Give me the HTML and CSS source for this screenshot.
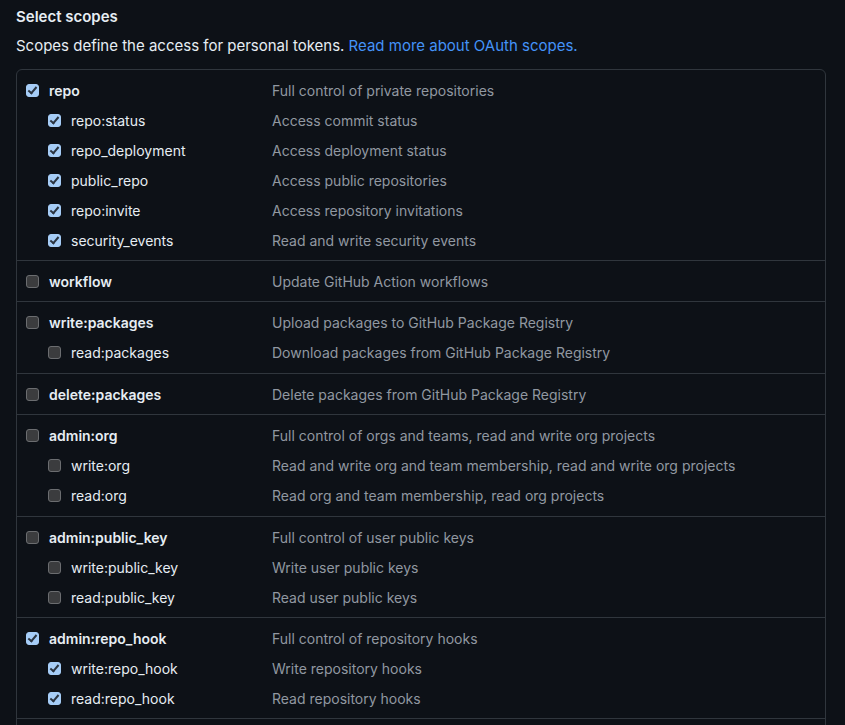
FILE: index.html
```html
<!DOCTYPE html>
<html lang="en">
<head>
<meta charset="utf-8">
<title>Select scopes</title>
<link rel="stylesheet" href="styles.css">
</head>
<body>
<div class="page">
  <h3 class="title">Select scopes</h3>
  <p class="note">Scopes define the access for personal tokens. <a class="link" href="#">Read more about OAuth scopes.</a></p>
  <div class="box">
    <div class="group">
      <div class="row top"><span class="cb on"></span><span class="name">repo</span><span class="desc">Full control of private repositories</span></div>
      <div class="row sub"><span class="cb on"></span><span class="name">repo:status</span><span class="desc">Access commit status</span></div>
      <div class="row sub"><span class="cb on"></span><span class="name">repo_deployment</span><span class="desc">Access deployment status</span></div>
      <div class="row sub"><span class="cb on"></span><span class="name">public_repo</span><span class="desc">Access public repositories</span></div>
      <div class="row sub"><span class="cb on"></span><span class="name">repo:invite</span><span class="desc">Access repository invitations</span></div>
      <div class="row sub"><span class="cb on"></span><span class="name">security_events</span><span class="desc">Read and write security events</span></div>
    </div>
    <div class="group">
      <div class="row top"><span class="cb"></span><span class="name">workflow</span><span class="desc">Update GitHub Action workflows</span></div>
    </div>
    <div class="group loose">
      <div class="row top"><span class="cb"></span><span class="name">write:packages</span><span class="desc">Upload packages to GitHub Package Registry</span></div>
      <div class="row sub"><span class="cb"></span><span class="name">read:packages</span><span class="desc">Download packages from GitHub Package Registry</span></div>
    </div>
    <div class="group">
      <div class="row top"><span class="cb"></span><span class="name">delete:packages</span><span class="desc">Delete packages from GitHub Package Registry</span></div>
    </div>
    <div class="group loose">
      <div class="row top"><span class="cb"></span><span class="name">admin:org</span><span class="desc">Full control of orgs and teams, read and write org projects</span></div>
      <div class="row sub"><span class="cb"></span><span class="name">write:org</span><span class="desc">Read and write org and team membership, read and write org projects</span></div>
      <div class="row sub"><span class="cb"></span><span class="name">read:org</span><span class="desc">Read org and team membership, read org projects</span></div>
    </div>
    <div class="group">
      <div class="row top"><span class="cb"></span><span class="name">admin:public_key</span><span class="desc">Full control of user public keys</span></div>
      <div class="row sub"><span class="cb"></span><span class="name">write:public_key</span><span class="desc">Write user public keys</span></div>
      <div class="row sub"><span class="cb"></span><span class="name">read:public_key</span><span class="desc">Read user public keys</span></div>
    </div>
    <div class="group">
      <div class="row top"><span class="cb on"></span><span class="name">admin:repo_hook</span><span class="desc">Full control of repository hooks</span></div>
      <div class="row sub"><span class="cb on"></span><span class="name">write:repo_hook</span><span class="desc">Write repository hooks</span></div>
      <div class="row sub"><span class="cb on"></span><span class="name">read:repo_hook</span><span class="desc">Read repository hooks</span></div>
    </div>
    <div class="group tail"></div>
  </div>
</div>
</body>
</html>
```

FILE: styles.css
```css
html, body {
  margin: 0;
  padding: 0;
  background: #0d1117;
  height: 100%;
  overflow: hidden;
}
.page {
  padding: 6px 16px 0 16px;
  width: 810px;
  font-family: Inter, "Liberation Sans", sans-serif;
  color: #e6edf3;
}
.title {
  margin: 0;
  font-size: 15px;
  font-weight: 600;
  line-height: 21px;
}
.note {
  margin: 8px 0 13px 0;
  font-size: 15px;
  line-height: 21px;
  color: #e6edf3;
}
.link {
  color: #4493f8;
  text-decoration: none;
}
.box {
  border: 1px solid #30363d;
  border-radius: 6px;
}
.group {
  display: flex;
  flex-direction: column;
  gap: 10px;
  padding: 11px 0 9px 0;
  border-top: 1px solid #30363d;
}
.group.loose {
  padding-bottom: 10px;
}
.group:first-child {
  border-top: none;
}
.group.tail {
  height: 40px;
  box-sizing: border-box;
}
.row {
  display: flex;
  align-items: center;
  height: 20px;
  font-size: 14px;
  line-height: 20px;
}
.row.top {
  padding-left: 9px;
}
.row.sub {
  padding-left: 31px;
}
.cb {
  flex: none;
  box-sizing: border-box;
  width: 13px;
  height: 13px;
  border-radius: 3px;
  background: #3b3c3e;
  border: 1px solid #6b6d70;
  margin-right: 10px;
  position: relative;
  top: -1px;
}
.cb.on {
  background: #a6cdf7;
  border-color: #a6cdf7;
}
.cb.on::after {
  content: "";
  position: absolute;
  left: 3px;
  top: 0px;
  width: 3px;
  height: 7px;
  border-right: 2px solid #2a3440;
  border-bottom: 2px solid #2a3440;
  transform: rotate(40deg);
}
.name {
  font-weight: 600;
  color: #e6edf3;
}
.row.sub .name {
  font-weight: 400;
}
.row.top .name {
  width: 223px;
}
.row.sub .name {
  width: 201px;
}
.desc {
  color: #9198a1;
}
```
